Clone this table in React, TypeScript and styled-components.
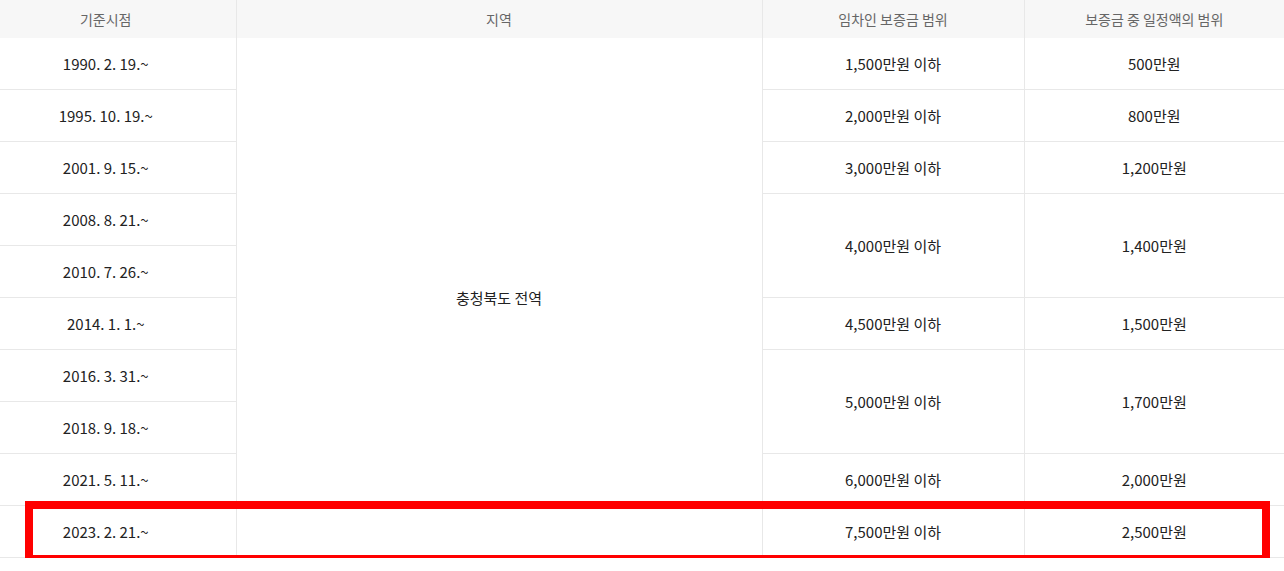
import React from "react";
import styled, { createGlobalStyle } from "styled-components";

const Global = createGlobalStyle`
  html, body { margin: 0; padding: 0; background: #fff; overflow: hidden; }
  body { font-family: "Noto Sans CJK KR", "Noto Sans", sans-serif; }
`;

const Wrap = styled.div`
  position: relative;
  width: 1284px;
  overflow: hidden;
`;

const Table = styled.table`
  width: 1308px;
  margin-left: -24px;
  border-collapse: collapse;
  table-layout: fixed;
`;

const Th = styled.th`
  height: 38px;
  padding: 0;
  background: #f7f7f7;
  color: #666;
  font-size: 14px;
  font-weight: 400;
  text-align: center;
  border-left: 1px solid #e8e8e8;
  &:first-child { border-left: none; }
`;

const Td = styled.td`
  height: 51px;
  padding: 0;
  color: #222;
  font-size: 15px;
  text-align: center;
  vertical-align: middle;
  border-left: 1px solid #e8e8e8;
  border-bottom: 1px solid #e8e8e8;
  &:first-child { border-left: none; }
`;

const Highlight = styled.div`
  position: absolute;
  left: 25px;
  top: 501px;
  width: 1245px;
  height: 62px;
  box-sizing: border-box;
  border: 8px solid #ff0000;
  pointer-events: none;
`;

type Row = { date: string; dep?: string; amt?: string; span?: number };

const rows: Row[] = [
  { date: "1990. 2. 19.~", dep: "1,500만원 이하", amt: "500만원" },
  { date: "1995. 10. 19.~", dep: "2,000만원 이하", amt: "800만원" },
  { date: "2001. 9. 15.~", dep: "3,000만원 이하", amt: "1,200만원" },
  { date: "2008. 8. 21.~", dep: "4,000만원 이하", amt: "1,400만원", span: 2 },
  { date: "2010. 7. 26.~" },
  { date: "2014. 1. 1.~", dep: "4,500만원 이하", amt: "1,500만원" },
  { date: "2016. 3. 31.~", dep: "5,000만원 이하", amt: "1,700만원", span: 2 },
  { date: "2018. 9. 18.~" },
  { date: "2021. 5. 11.~", dep: "6,000만원 이하", amt: "2,000만원" },
  { date: "2023. 2. 21.~", dep: "7,500만원 이하", amt: "2,500만원" },
];

export default function App() {
  return (
    <Wrap>
      <Global />
      <Table>
        <colgroup>
          <col style={{ width: 260 }} />
          <col style={{ width: 526 }} />
          <col style={{ width: 262 }} />
          <col style={{ width: 260 }} />
        </colgroup>
        <thead>
          <tr>
            <Th>기준시점</Th>
            <Th>지역</Th>
            <Th>임차인 보증금 범위</Th>
            <Th>보증금 중 일정액의 범위</Th>
          </tr>
        </thead>
        <tbody>
          {rows.map((r, i) => (
            <tr key={r.date}>
              <Td>{r.date}</Td>
              {i === 0 && <Td rowSpan={rows.length}>충청북도 전역</Td>}
              {r.dep && <Td rowSpan={r.span ?? 1}>{r.dep}</Td>}
              {r.amt && <Td rowSpan={r.span ?? 1}>{r.amt}</Td>}
            </tr>
          ))}
        </tbody>
      </Table>
      <Highlight />
    </Wrap>
  );
}
